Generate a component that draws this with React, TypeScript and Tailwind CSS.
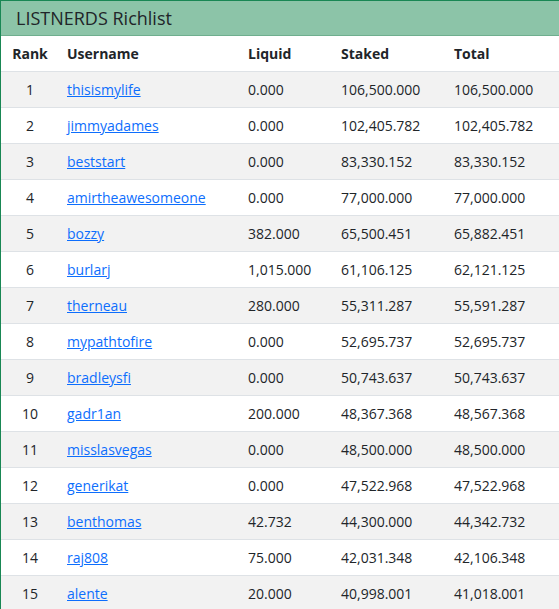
import React from "react";

const rows: [number, string, string, string, string][] = [
  [1, "thisismylife", "0.000", "106,500.000", "106,500.000"],
  [2, "jimmyadames", "0.000", "102,405.782", "102,405.782"],
  [3, "beststart", "0.000", "83,330.152", "83,330.152"],
  [4, "amirtheawesomeone", "0.000", "77,000.000", "77,000.000"],
  [5, "bozzy", "382.000", "65,500.451", "65,882.451"],
  [6, "burlarj", "1,015.000", "61,106.125", "62,121.125"],
  [7, "therneau", "280.000", "55,311.287", "55,591.287"],
  [8, "mypathtofire", "0.000", "52,695.737", "52,695.737"],
  [9, "bradleysfi", "0.000", "50,743.637", "50,743.637"],
  [10, "gadr1an", "200.000", "48,367.368", "48,567.368"],
  [11, "misslasvegas", "0.000", "48,500.000", "48,500.000"],
  [12, "generikat", "0.000", "47,522.968", "47,522.968"],
  [13, "benthomas", "42.732", "44,300.000", "44,342.732"],
  [14, "raj808", "75.000", "42,031.348", "42,106.348"],
  [15, "alente", "20.000", "40,998.001", "41,018.001"],
];

export default function App() {
  return (
    <div
      className="w-[559px] h-[609px] overflow-hidden bg-white text-[#212529]"
      style={{ fontFamily: "'Open Sans', 'Noto Sans', sans-serif" }}
    >
      <div className="border-l border-t border-[#198754]">
        <div className="h-[35px] bg-[#8cc4a8] border-b border-[#6fae8e] flex items-center pl-[15px] text-[18px] text-[#212529]">
          LISTNERDS Richlist
        </div>
        <table className="w-full border-collapse table-fixed text-[14px]">
          <colgroup>
            <col className="w-[58px]" />
            <col className="w-[181px]" />
            <col className="w-[93px]" />
            <col className="w-[113px]" />
            <col />
          </colgroup>
          <thead>
            <tr className="h-[35px] border-b border-[#dee2e6]">
              <th className="text-center font-bold px-2">Rank</th>
              <th className="text-left font-bold px-2">Username</th>
              <th className="text-left font-bold px-2">Liquid</th>
              <th className="text-left font-bold px-2">Staked</th>
              <th className="text-left font-bold px-2">Total</th>
            </tr>
          </thead>
          <tbody>
            {rows.map(([r, u, l, s, t]) => (
              <tr
                key={r}
                className={`h-[36px] border-b border-[#dee2e6] ${r % 2 === 1 ? "bg-[#f2f2f2]" : "bg-white"}`}
              >
                <td className="text-center px-2">{r}</td>
                <td className="px-2">
                  <a href="#" className="text-[#0d6efd] underline">
                    {u}
                  </a>
                </td>
                <td className="px-2">{l}</td>
                <td className="px-2">{s}</td>
                <td className="px-2">{t}</td>
              </tr>
            ))}
          </tbody>
        </table>
      </div>
    </div>
  );
}
